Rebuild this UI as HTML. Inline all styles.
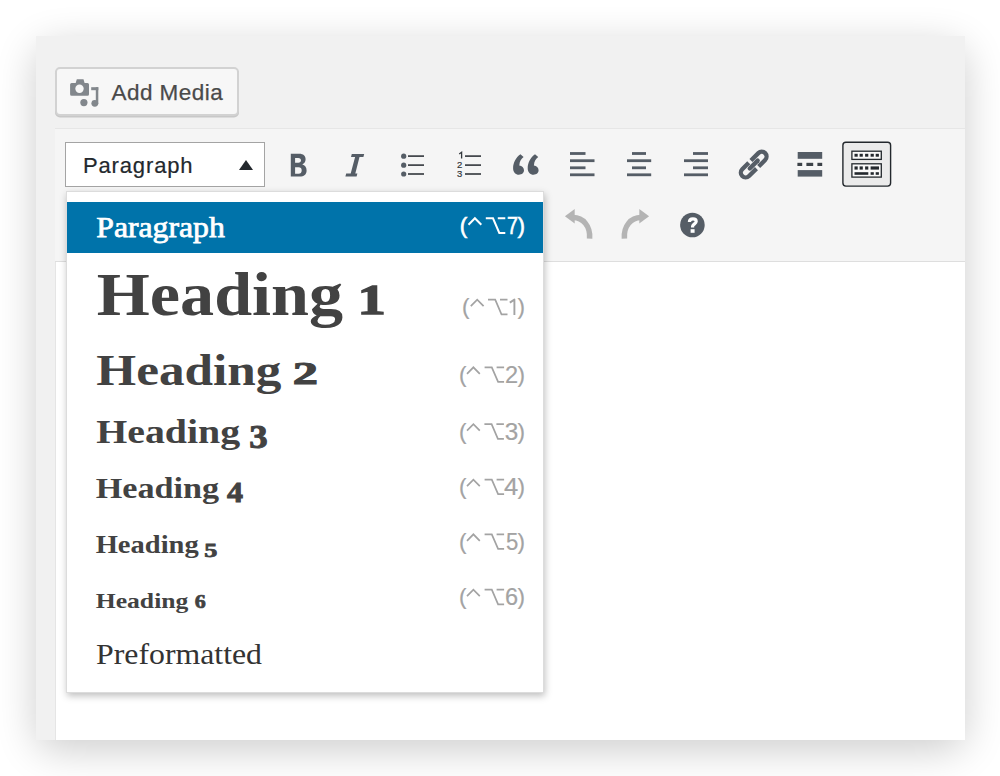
<!DOCTYPE html>
<html><head><meta charset="utf-8">
<style>
*{box-sizing:border-box;margin:0;padding:0}
html,body{width:1000px;height:776px;background:#fff;overflow:hidden;font-family:"Liberation Sans",sans-serif}
.a{position:absolute}
.shd{left:36px;top:36px;width:929px;height:704px;border-radius:18px;box-shadow:0 10px 40px rgba(0,0,0,.2)}
.panel{left:36px;top:36px;width:929px;height:704px;background:#f1f1f1}
.btn{left:55px;top:67px;width:184px;height:49px;background:#f7f7f7;border:2px solid #d2d2d2;border-radius:5px;box-shadow:0 1.5px 0 #c8c8c8}
.btnt{left:111.5px;top:79.5px;font-size:22.5px;color:#4a4a4a;letter-spacing:.45px;line-height:26px;white-space:nowrap;-webkit-text-stroke:.25px #4a4a4a}
.wrap{left:55px;top:128px;width:910px;height:612px;background:#fff;border-left:1px solid #e5e5e5}
.tb{left:55px;top:128px;width:910px;height:134px;background:#f5f5f5;border-top:1px solid #e6e6e6;border-bottom:1.5px solid #dedede}
.sel{left:65px;top:142px;width:200px;height:45px;background:#fff;border:1.5px solid #a4a4a4}
.selt{left:83px;top:153px;font-size:22px;color:#23282d;letter-spacing:.85px;line-height:26px;white-space:nowrap;-webkit-text-stroke:.2px #23282d}
.menu{left:66px;top:191px;width:478px;height:502px;background:#fff;border:1px solid #dcdcdc;box-shadow:1px 3px 7px rgba(0,0,0,.25)}
.blue{left:67px;top:202px;width:476px;height:51px;background:#0073aa}
.h{font-family:"Liberation Serif",serif;font-weight:bold;color:#404040;white-space:nowrap;line-height:1;transform-origin:0 0}
svg{position:absolute;left:0;top:0}
</style></head><body>
<div class="a shd"></div>
<div class="a panel"></div>
<div class="a btn"></div>
<div class="a btnt">Add Media</div>
<div class="a wrap"></div>
<div class="a tb"></div>
<div class="a sel"></div>
<div class="a selt">Paragraph</div>

<svg width="1000" height="776" viewBox="0 0 1000 776">
  <!-- add media icon -->
  <g fill="#82878c">
    <path d="M75.7,83 L76.8,79.3 H83.5 L84.6,83 H87.5 Q89,83 89,84.5 V94.3 Q89,95.8 87.5,95.8 H71.6 Q70.1,95.8 70.1,94.3 V84.5 Q70.1,83 71.6,83 Z"/>
    <circle cx="79.5" cy="88.8" r="4.2" fill="#f7f7f7"/>
    <rect x="91.2" y="87.2" width="7.1" height="3"/>
    <rect x="95.8" y="87.2" width="2.5" height="17"/>
    <circle cx="94.8" cy="103.3" r="3.4"/>
    <circle cx="83.9" cy="102.6" r="3.6"/>
  </g>
  <!-- select triangle -->
  <path d="M239,170 L246,160 L253,170 Z" fill="#23282d"/>
  <g fill="#555d66">
    <!-- bold -->
    <path fill-rule="evenodd" d="M290.8,153.7 H299.2 C303.3,153.7 305.6,155.8 305.6,159.2 C305.6,161.7 304.3,163.5 302.3,164.4 C305,165.1 306.6,167.3 306.6,170.4 C306.6,174.3 304,176.6 299.6,176.6 H290.8 Z M295.1,157.9 H298.3 C300.1,157.9 301,158.8 301,160.3 C301,161.8 300.1,162.7 298.3,162.7 H295.1 Z M295.1,167.2 H298.6 C300.6,167.2 301.7,168.4 301.7,170.4 C301.7,172.4 300.6,173.7 298.6,173.7 H295.1 Z"/>
    <!-- italic -->
    <path d="M351.8,153.9 H364.2 L363.4,156.9 H359.5 L355.3,173.6 H357.4 L356.6,176.6 H345.4 L346.2,173.6 H350.7 L355.1,156.9 H351 Z"/>
    <!-- ul -->
    <circle cx="403.7" cy="156.2" r="2.6"/><circle cx="403.7" cy="165.2" r="2.6"/><circle cx="403.7" cy="174" r="2.6"/>
    <rect x="408" y="155.3" width="16" height="1.6" fill="#32373c"/><rect x="408" y="164.3" width="16" height="1.6" fill="#32373c"/><rect x="408" y="173.2" width="16" height="1.6" fill="#32373c"/>
    <!-- ol -->
    <g font-family="Liberation Sans" font-size="9.5" fill="#32373c" stroke="#32373c" stroke-width="0.2">
      <path d="M459.2,154 L461.6,152.3 V158.6" fill="none" stroke-width="1.3"/><text x="456.9" y="168.1">2</text><text x="456.9" y="177.1">3</text>
    </g>
    <rect x="465" y="155.3" width="16" height="1.6" fill="#32373c"/><rect x="465" y="164.3" width="16" height="1.6" fill="#32373c"/><rect x="465" y="173.2" width="16" height="1.6" fill="#32373c"/>
    <!-- quote -->
    <path d="M520.4,154.3 L523.6,157.1 C521.3,158.8 519.6,161.5 519.3,165.4 C521.9,165.7 524,167.6 524,170.3 C524,172.9 521.9,174.7 518.9,174.7 C515.6,174.7 513.1,172.3 513.1,168.2 C513.1,162.7 515.8,157.7 520.4,154.3 Z"/>
    <path transform="translate(14.6,0)" d="M520.4,154.3 L523.6,157.1 C521.3,158.8 519.6,161.5 519.3,165.4 C521.9,165.7 524,167.6 524,170.3 C524,172.9 521.9,174.7 518.9,174.7 C515.6,174.7 513.1,172.3 513.1,168.2 C513.1,162.7 515.8,157.7 520.4,154.3 Z"/>
    <!-- align left -->
    <rect x="570" y="152.1" width="15.5" height="2.8"/><rect x="570" y="159.3" width="24.5" height="2.8"/><rect x="570" y="166.4" width="15.5" height="2.8"/><rect x="570" y="173.4" width="24.5" height="2.8"/>
    <!-- align center -->
    <rect x="632" y="152.1" width="14" height="2.8"/><rect x="627" y="159.3" width="24.2" height="2.8"/><rect x="632" y="166.4" width="14" height="2.8"/><rect x="627" y="173.4" width="24.2" height="2.8"/>
    <!-- align right -->
    <rect x="693" y="152.1" width="15" height="2.8"/><rect x="684" y="159.3" width="24" height="2.8"/><rect x="693" y="166.4" width="15" height="2.8"/><rect x="684" y="173.4" width="24" height="2.8"/>
    <!-- link -->
    <g transform="translate(753.7,164.6) rotate(-45)" fill="none" stroke="#555d66" stroke-width="4.3">
      <path d="M0.9,-4.8 H11.4 A4.8,4.8 0 0 1 11.4,4.8 H2.2"/>
      <path d="M-0.9,4.8 H-11.4 A4.8,4.8 0 0 1 -11.4,-4.8 H-2.2"/>
      <path d="M-5.6,0 H5.6" stroke-linecap="round"/>
    </g>
    <!-- more -->
    <rect x="797.7" y="152" width="24.5" height="6.8"/>
    <rect x="797.4" y="162.8" width="4.8" height="3.2" fill="#3c4248"/><rect x="806.4" y="162.8" width="6.8" height="3.2" fill="#3c4248"/><rect x="817.4" y="162.8" width="4.8" height="3.2" fill="#3c4248"/>
    <rect x="797.7" y="170.1" width="24.5" height="6.5"/>
  </g>
  <!-- toggle -->
  <rect x="842.9" y="142.2" width="47.7" height="43.9" rx="3" fill="#ebebeb" stroke="#23282d" stroke-width="1.4"/>
  <g fill="#23282d">
    <rect x="851.9" y="151.2" width="29.4" height="8.2" fill="#f9f9f9" stroke="#23282d" stroke-width="1.3"/>
    <rect x="854.5" y="153.8" width="3.2" height="2.9"/><rect x="859.6" y="153.8" width="3.2" height="2.9"/><rect x="865.1" y="153.8" width="3.2" height="2.9"/><rect x="870.6" y="153.8" width="3.2" height="2.9"/><rect x="875.7" y="153.8" width="3.2" height="2.9"/>
    <rect x="851.9" y="163.8" width="29.4" height="13.3" fill="#f9f9f9" stroke="#23282d" stroke-width="1.3"/>
    <rect x="854.5" y="166.4" width="3.2" height="3.2"/><rect x="859.6" y="166.4" width="3.2" height="3.2"/><rect x="865.1" y="166.4" width="3.2" height="3.2"/><rect x="870.6" y="166.4" width="8.4" height="3.2"/>
    <rect x="854.5" y="172.2" width="13.8" height="2.6"/><rect x="870.6" y="172.2" width="3.2" height="2.6"/><rect x="875.7" y="172.2" width="3.2" height="2.6"/>
  </g>
  <!-- undo / redo -->
  <g fill="#b4b4b4">
    <path d="M564.9,216.3 L574.7,208.9 L574.7,223.6 Z"/>
    <path d="M573,217.6 C583,217.6 590.6,226 589.6,238.6" fill="none" stroke="#b4b4b4" stroke-width="5.5"/>
    <path d="M649.1,216.3 L639.3,208.9 L639.3,223.6 Z"/>
    <path d="M641,217.6 C631,217.6 623.4,226 624.4,238.6" fill="none" stroke="#b4b4b4" stroke-width="5.5"/>
  </g>
  <!-- help -->
  <circle cx="692.4" cy="225" r="12.3" fill="#555d66"/>
  <path d="M689.4,222 C689.4,219.4 690.9,218.9 692.9,218.9 C695,218.9 696.2,219.9 696.2,221.5 C696.2,223.6 693,224 692.6,226.2 V227.6" fill="none" stroke="#fff" stroke-width="3.2"/><rect x="690.6" y="229.2" width="4" height="3.6" fill="#fff"/>
</svg>

<div class="a menu"></div>
<div class="a blue"></div>
<svg width="1000" height="776" viewBox="0 0 1000 776">
<g font-family="Liberation Serif" font-weight="bold" fill="#424242">
<text x="96.80" y="315.20" font-size="60.60" textLength="246.20" lengthAdjust="spacingAndGlyphs">Heading</text>
<text x="96.25" y="384.50" font-size="44.30" textLength="185.20" lengthAdjust="spacingAndGlyphs">Heading</text>
<text x="96.25" y="442.50" font-size="33.60" textLength="143.90" lengthAdjust="spacingAndGlyphs">Heading</text>
<text x="95.70" y="498.00" font-size="29.90" textLength="123.50" lengthAdjust="spacingAndGlyphs">Heading</text>
<text x="95.70" y="553.20" font-size="24.40" textLength="103.00" lengthAdjust="spacingAndGlyphs">Heading</text>
<text x="95.70" y="608.30" font-size="22.00" textLength="92.70" lengthAdjust="spacingAndGlyphs">Heading</text>
<text x="357.47" y="314.00" font-size="43.20" textLength="28.30" lengthAdjust="spacingAndGlyphs" stroke="#424242" stroke-width="1.30">1</text>
<text x="292.76" y="383.50" font-size="32.29" textLength="25.18" lengthAdjust="spacingAndGlyphs" stroke="#424242" stroke-width="1.10">2</text>
<text x="249.28" y="447.90" font-size="33.77" textLength="18.42" lengthAdjust="spacingAndGlyphs" stroke="#424242" stroke-width="1.00">3</text>
<text x="227.05" y="502.30" font-size="28.55" textLength="16.00" lengthAdjust="spacingAndGlyphs" stroke="#424242" stroke-width="0.90">4</text>
<text x="204.37" y="556.60" font-size="19.71" textLength="13.06" lengthAdjust="spacingAndGlyphs" stroke="#424242" stroke-width="0.80">5</text>
<text x="194.78" y="608.00" font-size="19.65" textLength="11.04" lengthAdjust="spacingAndGlyphs" stroke="#424242" stroke-width="0.70">6</text>
</g>
<text x="96.3" y="237.1" font-family="Liberation Serif" font-size="30.4" fill="#fff" stroke="#fff" stroke-width="0.75" textLength="128.5" lengthAdjust="spacingAndGlyphs">Paragraph</text>
<text x="96" y="663.6" font-family="Liberation Serif" font-size="29.3" fill="#333" textLength="166" lengthAdjust="spacingAndGlyphs">Preformatted</text>
<g fill="#ffffff" stroke="#ffffff" stroke-width="0.60" font-family="Liberation Sans" font-size="22.5"><text x="459.80" y="233.00">(</text><text x="517.40" y="233.00">)</text><text x="507.00" y="233.80" font-size="24.2" textLength="10.90" lengthAdjust="spacingAndGlyphs">7</text><g fill="none" stroke-width="2.0"><path d="M468.50,224.80 L474.90,218.30 L481.30,224.80"/><path d="M485.80,218.30 H493.00 L499.30,232.90 H505.30 M497.80,218.30 H505.30"/></g></g>
<g fill="#a3a3a3" stroke="#a3a3a3" stroke-width="0.20" font-family="Liberation Sans" font-size="22.5"><text x="462.10" y="314.40">(</text><text x="517.40" y="314.40">)</text><path d="M509.80,302.60 L514.40,299.60 V314.90" fill="none" stroke-width="1.90" stroke-linejoin="round"/><g fill="none" stroke-width="1.7"><path d="M470.80,306.20 L477.20,299.70 L483.60,306.20"/><path d="M488.00,299.70 H495.20 L501.50,314.30 H507.50 M500.00,299.70 H507.50"/></g></g>
<g fill="#a3a3a3" stroke="#a3a3a3" stroke-width="0.20" font-family="Liberation Sans" font-size="22.5"><text x="459.10" y="382.00">(</text><text x="517.40" y="382.00">)</text><text x="505.10" y="382.80" font-size="24.2" textLength="13.10" lengthAdjust="spacingAndGlyphs">2</text><g fill="none" stroke-width="1.7"><path d="M467.00,373.80 L473.40,367.30 L479.80,373.80"/><path d="M484.60,367.30 H491.80 L498.10,381.90 H504.10 M496.60,367.30 H504.10"/></g></g>
<g fill="#a3a3a3" stroke="#a3a3a3" stroke-width="0.20" font-family="Liberation Sans" font-size="22.5"><text x="459.10" y="438.90">(</text><text x="517.40" y="438.90">)</text><text x="504.70" y="439.70" font-size="24.2" textLength="13.50" lengthAdjust="spacingAndGlyphs">3</text><g fill="none" stroke-width="1.7"><path d="M467.00,430.70 L473.40,424.20 L479.80,430.70"/><path d="M484.40,424.20 H491.60 L497.90,438.80 H503.90 M496.40,424.20 H503.90"/></g></g>
<g fill="#a3a3a3" stroke="#a3a3a3" stroke-width="0.20" font-family="Liberation Sans" font-size="22.5"><text x="459.10" y="494.30">(</text><text x="517.40" y="494.30">)</text><text x="504.00" y="495.10" font-size="24.2" textLength="14.20" lengthAdjust="spacingAndGlyphs">4</text><g fill="none" stroke-width="1.7"><path d="M467.00,486.10 L473.40,479.60 L479.80,486.10"/><path d="M484.60,479.60 H491.80 L498.10,494.20 H504.10 M496.60,479.60 H504.10"/></g></g>
<g fill="#a3a3a3" stroke="#a3a3a3" stroke-width="0.20" font-family="Liberation Sans" font-size="22.5"><text x="459.10" y="549.00">(</text><text x="517.40" y="549.00">)</text><text x="505.90" y="549.80" font-size="24.2" textLength="12.30" lengthAdjust="spacingAndGlyphs">5</text><g fill="none" stroke-width="1.7"><path d="M467.00,540.80 L473.40,534.30 L479.80,540.80"/><path d="M484.60,534.30 H491.80 L498.10,548.90 H504.10 M496.60,534.30 H504.10"/></g></g>
<g fill="#a3a3a3" stroke="#a3a3a3" stroke-width="0.20" font-family="Liberation Sans" font-size="22.5"><text x="459.10" y="604.40">(</text><text x="517.40" y="604.40">)</text><text x="505.10" y="605.20" font-size="24.2" textLength="13.10" lengthAdjust="spacingAndGlyphs">6</text><g fill="none" stroke-width="1.7"><path d="M467.00,596.20 L473.40,589.70 L479.80,596.20"/><path d="M484.60,589.70 H491.80 L498.10,604.30 H504.10 M496.60,589.70 H504.10"/></g></g>
</svg>
</body></html>
